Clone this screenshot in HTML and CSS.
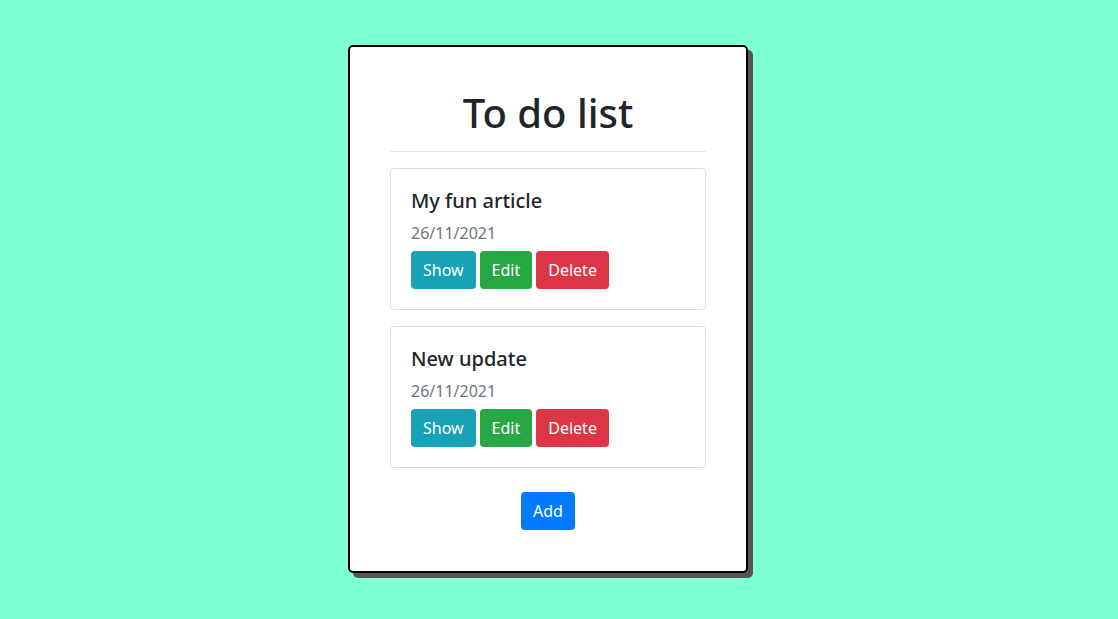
FILE: index.html
```html
<!DOCTYPE html>
<html lang="en">
<head>
<meta charset="utf-8">
<title>To do list</title>
<link rel="stylesheet" href="styles.css">
</head>
<body>
<main class="page">
  <section class="todo-card">
    <h1 class="title">To do list</h1>
    <hr class="divider">
    <div class="items">
      <article class="item">
        <h5 class="item-title">My fun article</h5>
        <p class="item-date">26/11/2021</p>
        <div class="actions">
          <button class="btn btn-show">Show</button>
          <button class="btn btn-edit">Edit</button>
          <button class="btn btn-delete">Delete</button>
        </div>
      </article>
      <article class="item">
        <h5 class="item-title">New update</h5>
        <p class="item-date">26/11/2021</p>
        <div class="actions">
          <button class="btn btn-show">Show</button>
          <button class="btn btn-edit">Edit</button>
          <button class="btn btn-delete">Delete</button>
        </div>
      </article>
    </div>
    <div class="add-row">
      <button class="btn btn-add">Add</button>
    </div>
  </section>
</main>
</body>
</html>
```

FILE: styles.css
```css
* { box-sizing: border-box; }

html, body {
  margin: 0;
  padding: 0;
}

body {
  background: #7fffd4;
  font-family: "Noto Sans", "Open Sans", sans-serif;
  color: #212529;
  height: 619px;
}

.page {
  display: flex;
  padding: 45px 0 0 348px;
}

.todo-card {
  width: 400px;
  background: #fff;
  border: 2px solid #000;
  border-radius: 5px;
  box-shadow: 5px 5px 0 #555;
  padding: 42px 40px 41px;
}

.title {
  margin: 0;
  text-align: center;
  font-size: 40px;
  font-weight: 500;
  line-height: 48px;
}

.divider {
  margin: 14px 0 16px;
  border: 0;
  border-top: 1px solid rgba(0, 0, 0, 0.1);
}

.items {
  display: flex;
  flex-direction: column;
  gap: 16px;
}

.item {
  border: 1px solid #dcdcdc;
  border-radius: 4px;
  padding: 20px;
}

.item-title {
  margin: 0 0 8px;
  font-size: 20px;
  font-weight: 500;
  line-height: 24px;
}

.item-date {
  margin: 0 0 6px;
  font-size: 16px;
  line-height: 24px;
  color: #6c757d;
}

.actions {
  display: flex;
  gap: 4px;
}

.btn {
  font-family: inherit;
  font-size: 16px;
  line-height: 24px;
  padding: 7px 12px;
  border: 0;
  border-radius: 4px;
  color: #fff;
  cursor: pointer;
}

.btn-show { background: #17a2b8; }
.btn-edit { background: #28a745; }
.btn-delete { background: #dc3545; }
.btn-add { background: #007bff; }

.add-row {
  display: flex;
  justify-content: center;
  margin-top: 24px;
}
```
